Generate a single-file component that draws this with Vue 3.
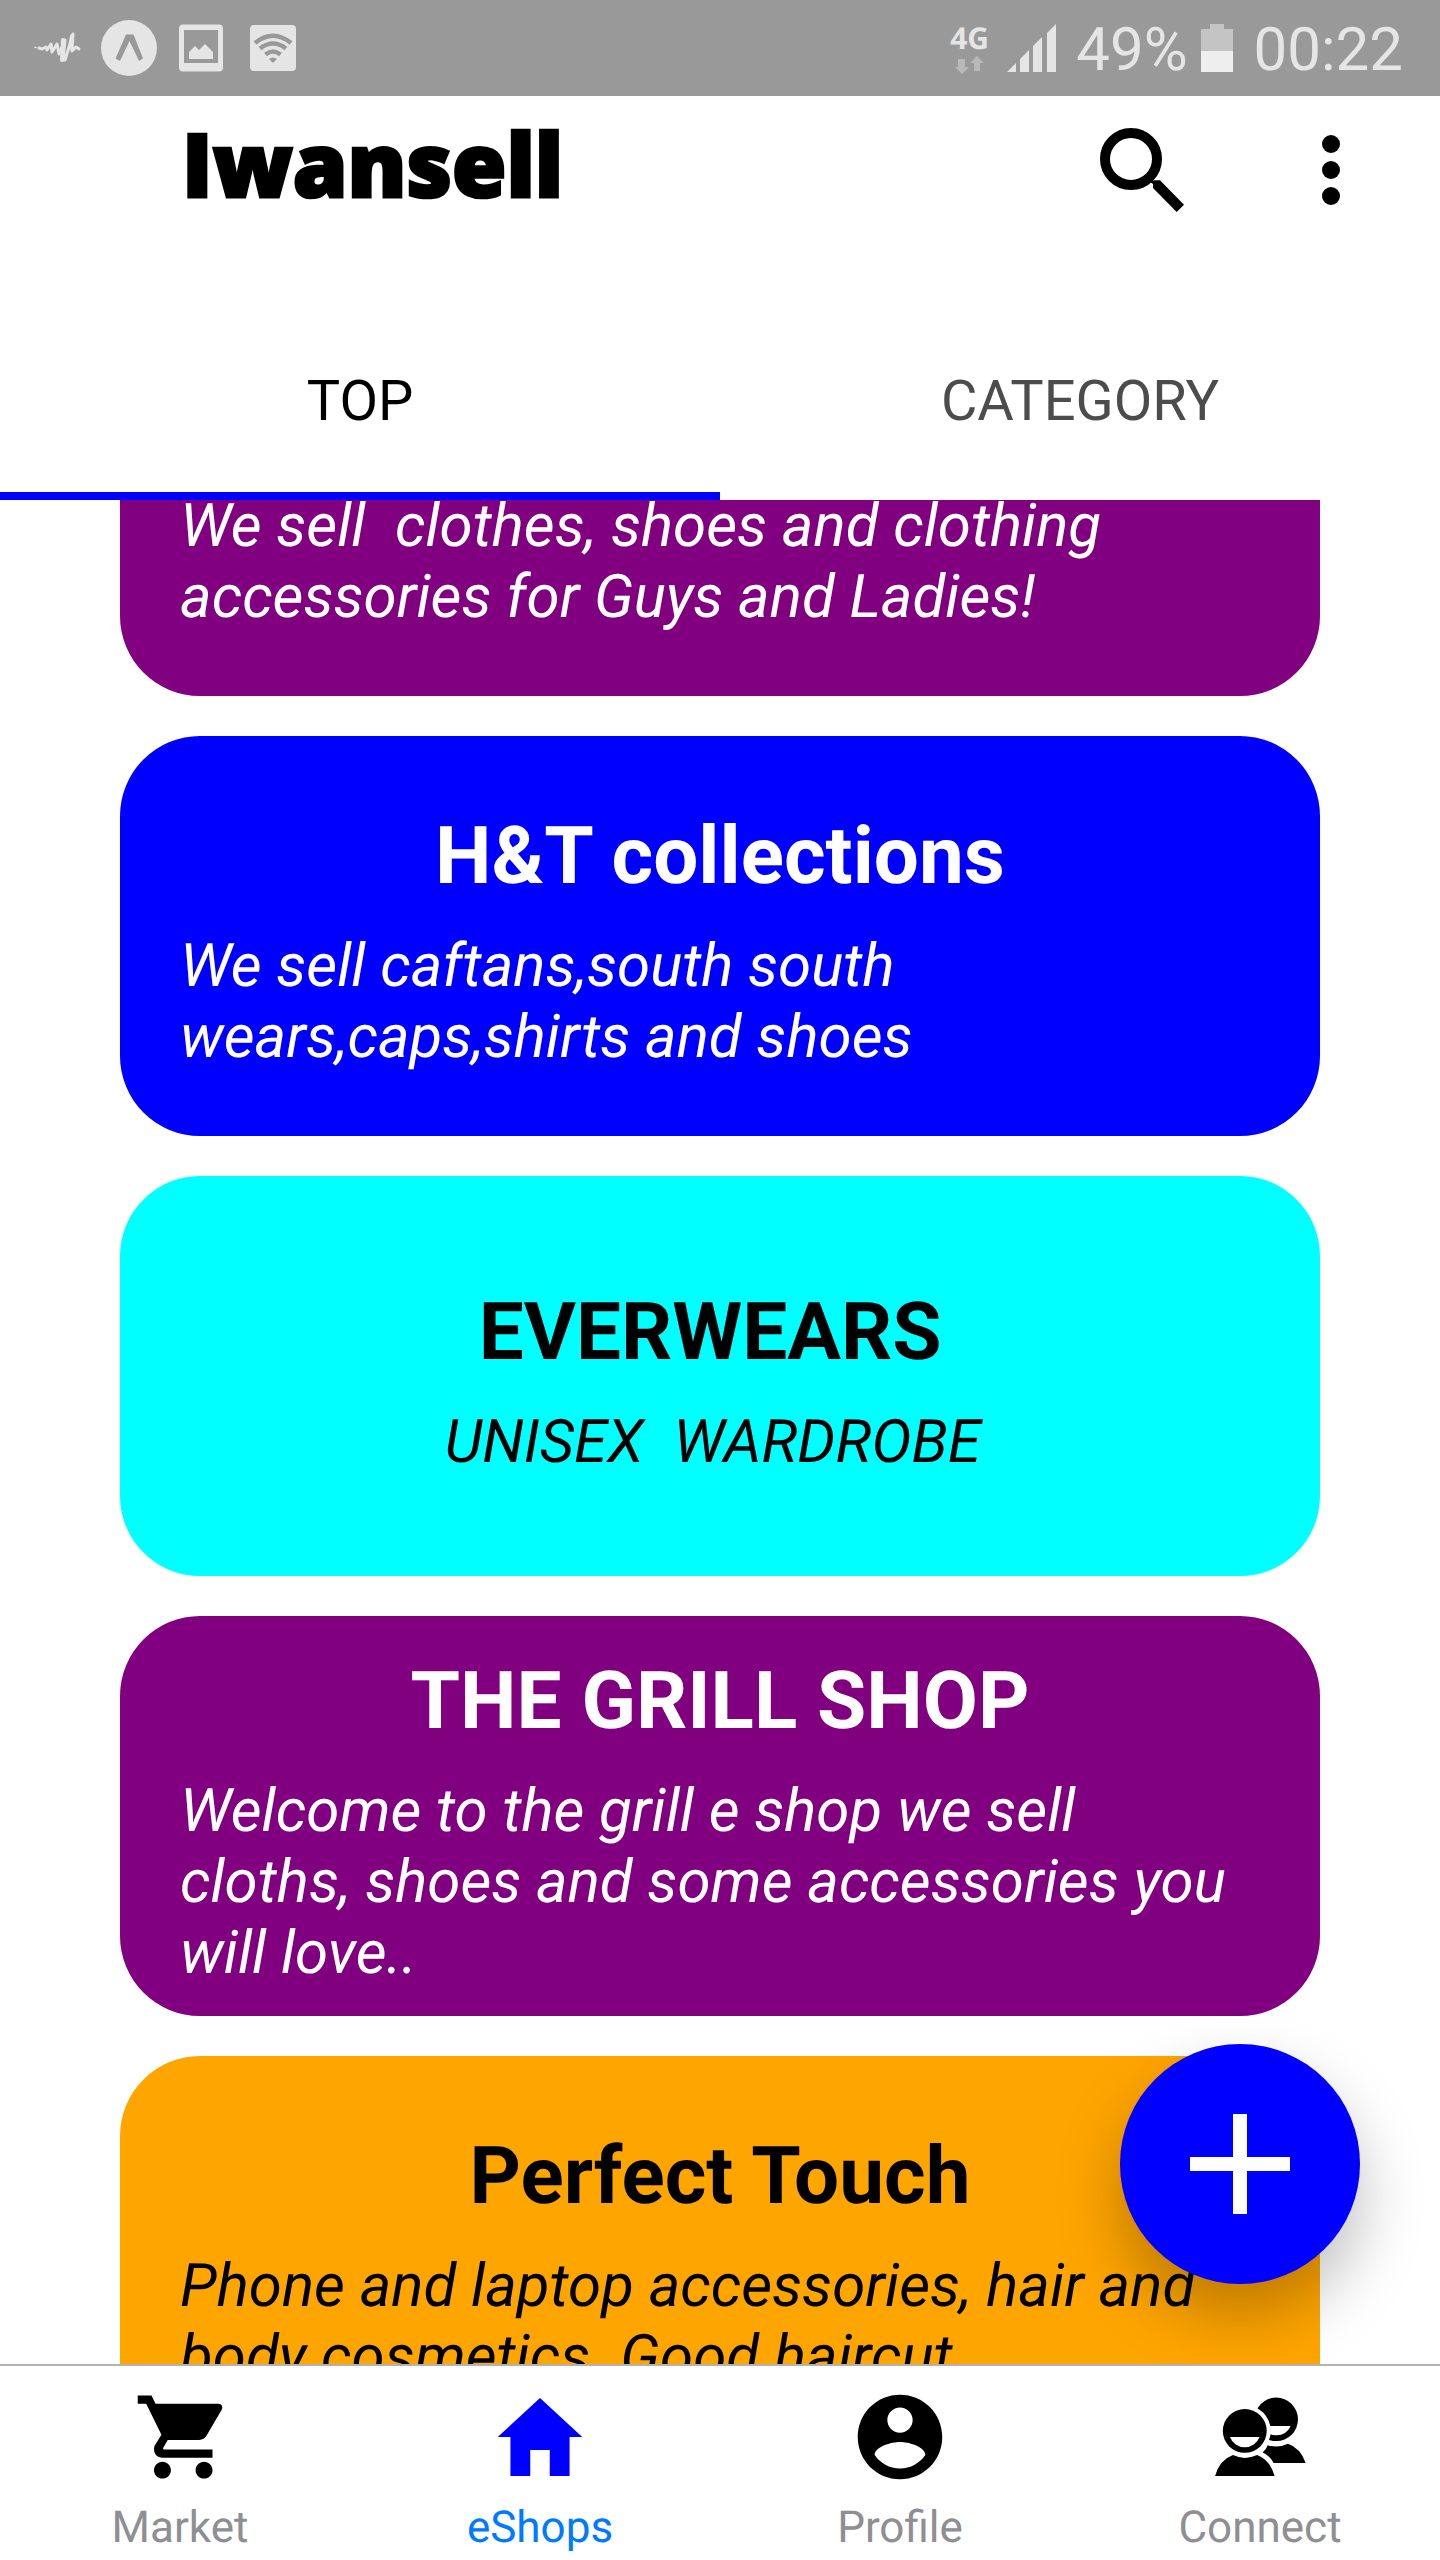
<script setup>
import { ref } from 'vue'

const activeTab = ref('TOP')
const tabs = ['TOP', 'CATEGORY']

const shops = [
  { text: 'We sell  clothes, shoes and clothing accessories for Guys and Ladies!', tone: 'purple', scrolled: true },
  { name: 'H&T collections', text: 'We sell caftans,south south wears,caps,shirts and shoes', tone: 'blue' },
  { name: 'EVERWEARS\u00a0', text: 'UNISEX  WARDROBE\u00a0', tone: 'cyan' },
  { name: 'THE GRILL SHOP', text: 'Welcome to the grill e shop we sell cloths, shoes and some accessories you will love..', tone: 'purple' },
  { name: 'Perfect Touch', text: 'Phone and laptop accessories, hair and body cosmetics. Good haircut', tone: 'orange' },
]
</script>

<template>
  <div class="app">
    <div class="status">
      <div class="status-left">
        <svg class="status-icon" viewBox="0 0 56 56" fill="none" stroke="#e5e5e5" stroke-linecap="round" stroke-linejoin="round">
          <path d="M6 27.500h1" stroke-width="1.500" />
          <path d="M10 28l3 1 4-2 1 3 4-6 1 8 5-8 2 10 6-14-2 20h2L44 14l-1 17 4-4 3 2" stroke-width="3" />
          <path d="M34 20l-1 20M43 16l-2 12" stroke-width="4" />
        </svg>
        <svg class="status-icon" viewBox="0 0 56 56">
          <circle cx="28" cy="28" r="28" fill="#e5e5e5" />
          <path d="M25 14.500h7.500L42 38.500l-4 2.500L28.500 21 19 41l-4.500-2.500z" fill="#999" />
        </svg>
        <svg class="status-icon" viewBox="0 0 56 56" fill="#e5e5e5">
          <path fill-rule="evenodd" d="M10 4.500h36q4 0 4 4v39q0 4-4 4H10q-4 0-4-4v-39q0-4 4-4zM11 10v33h34V10z" />
          <path d="M16 32l6-6 4 4 6-6 8 8v7H16z" />
        </svg>
        <svg class="status-icon" viewBox="0 0 56 56" fill="none" stroke="#999" stroke-width="4.500">
          <rect x="5" y="5" width="46" height="46" rx="4" fill="#e5e5e5" stroke="none" />
          <path d="M10 23q18-14.500 36 0M15 28.500q13-10 26 0M20.500 34.500q7.500-6 15 0" />
          <path d="M24 39q4-3 8 0l-4 4z" fill="#999" stroke="none" />
        </svg>
      </div>
      <div class="status-right">
        <div class="network">
          <span>4G</span>
          <svg viewBox="0 0 44 18" fill="#b9b9b9">
            <path d="M8 3h7v8h4l-7 7-7-7h3zM24 15h6V7h4l-7-7-7 7h4z" />
          </svg>
        </div>
        <svg class="signal" viewBox="0 0 56 48" fill="#e5e5e5">
          <path d="M0 48l9-9v9zM13 48V35l9-9v22zM26 48V22l9-9v35zM40 48V9l9-9v48z" />
        </svg>
        <span class="reading">49%</span>
        <svg class="battery" viewBox="0 0 40 48">
          <path d="M9 0h14v5h9v22H0V5h9z" fill="#c4c4c4" />
          <path d="M0 27h32v21H0z" fill="#eee" />
        </svg>
        <span class="reading">00:22</span>
      </div>
    </div>

    <header class="bar">
      <h1>Iwansell</h1>
      <button class="icon-button" type="button" aria-label="Search">
        <svg width="84" height="84" viewBox="0 0 84 84">
          <circle cx="31" cy="31" r="26" fill="none" stroke="#000" stroke-width="10" />
          <path d="M50 54l4.700-1.700H60l24 24.400-7.300 7.300L53 60v-4z" />
        </svg>
      </button>
      <button class="icon-button" type="button" aria-label="More options">
        <svg width="18" height="84" viewBox="0 0 18 84">
          <circle cx="9" cy="16" r="9" /><circle cx="9" cy="42" r="9" /><circle cx="9" cy="68" r="9" />
        </svg>
      </button>
    </header>

    <nav class="tabs">
      <button
        v-for="tab in tabs"
        :key="tab"
        type="button"
        :class="{ active: tab === activeTab }"
        @click="activeTab = tab"
      >{{ tab }}</button>
    </nav>

    <main class="content">
      <div class="list">
        <article v-for="shop in shops" :key="shop.text" class="shop" :class="[shop.tone, { scrolled: shop.scrolled }]">
          <h2 v-if="shop.name">{{ shop.name }}</h2>
          <p>{{ shop.text }}</p>
        </article>
      </div>
      <button class="fab" type="button" aria-label="Add shop">
        <svg width="100" height="100" viewBox="0 0 100 100" fill="#fff"><path d="M43 0h14v43h43v14H57v43H43V57H0V43h43z" /></svg>
      </button>
    </main>

    <nav class="bottom">
      <a href="#market">
        <svg viewBox="0 0 512 512">
          <path d="M169.600 377.600c-22.900 0-41.600 18.700-41.600 41.600s18.700 41.600 41.600 41.600 41.600-18.700 41.600-41.600-18.700-41.600-41.600-41.600zM48 51.200v41.600h41.600l74.900 151.700-31.300 51c-3.100 5.200-5.200 12.500-5.200 19.800 0 27.800 19 42.700 41.800 42.700H416v-41H177.900c-3.100 0-5.200-2.100-5.200-5.200l2.200-5.200 20.800-35.800h155c15.600 0 29.100-8.300 36.400-21.800L461.900 120c1.200-2.500 2.100-6.300 2.100-10.400 0-11.500-9.400-16.800-20.800-16.800H135.400L115.600 51.200zM374.400 377.600c-22.900 0-41.600 18.700-41.600 41.600s18.700 41.600 41.600 41.600 41.600-18.700 41.600-41.600-18.700-41.600-41.600-41.600z" />
        </svg>
        <span>Market</span>
      </a>
      <a href="#eshops" class="active" aria-current="page">
        <svg viewBox="0 0 512 512" fill="#00f"><path d="M208 448V320h96v128h97.600V256H464L256 64 48 256h62.400v192z" /></svg>
        <span>eShops</span>
      </a>
      <a href="#profile">
        <svg viewBox="0 0 512 512">
          <path fill-rule="evenodd" d="M256 48C141.100 48 48 141.100 48 256s93.100 208 208 208 208-93.100 208-208S370.900 48 256 48zm0 62.400c34.400 0 62.400 28 62.400 62.400s-28 62.400-62.400 62.400-62.400-28-62.400-62.400 28-62.400 62.400-62.400zm0 300.400c-51.600 0-97.800-26.500-124.800-66.600.6-41.400 83.200-64.100 124.800-64.100s124.200 22.700 124.800 64.100c-27 40.100-73.200 66.600-124.800 66.600z" />
        </svg>
        <span>Profile</span>
      </a>
      <a href="#connect">
        <svg viewBox="0 0 512 512">
          <mask id="behind">
            <rect width="512" height="512" fill="#fff" />
            <circle cx="181" cy="226" r="128" fill="#000" />
          </mask>
          <g mask="url(#behind)">
            <circle cx="336" cy="169" r="107" />
            <path d="M265 202h142a78 78 0 0 1-142 0z" fill="#fff" />
          </g>
          <path d="M294 296q51 17 99-7 61 19 88 95H323q-15-33-54-52 17-14 25-36z" />
          <circle cx="181" cy="226" r="108" />
          <path d="M108 256h146a78 78 0 0 1-146 0z" fill="#fff" />
          <path d="M35 448q22-79 88-103 58 28 119 0 64 24 86 103z" />
        </svg>
        <span>Connect</span>
      </a>
    </nav>
  </div>
</template>

<style>
body {
  margin: 0;
}
</style>

<style scoped>
.app {
  display: flex;
  flex-direction: column;
  height: 100vh;
  background: #fff;
  color: #000;
  font-family: Roboto, "Liberation Sans", sans-serif;
  text-rendering: geometricPrecision;
}
button {
  margin: 0;
  padding: 0;
  border: 0;
  background: none;
  color: inherit;
  font: inherit;
}
svg {
  display: block;
}

.status {
  display: flex;
  flex: none;
  justify-content: space-between;
  align-items: center;
  height: 96px;
  padding: 0 37px 0 29px;
  background: #999;
  color: #e5e5e5;
  font-size: 60px;
  line-height: 70px;
}
.status-left {
  display: flex;
  gap: 16px;
}
.status-right {
  display: flex;
  align-items: center;
  gap: 13px;
}
.status-icon {
  width: 56px;
  height: 56px;
}
.reading {
  padding-top: 4px;
}
.network {
  display: flex;
  flex-direction: column;
  gap: 3px;
  width: 44px;
  font: bold 30px/30px "Noto Sans", sans-serif;
}
.network svg {
  width: 44px;
  height: 18px;
}
.signal {
  width: 56px;
  height: 48px;
}
.battery {
  width: 40px;
  height: 48px;
}

.bar {
  display: flex;
  flex: none;
  align-items: center;
  gap: 138px;
  height: 148px;
  padding: 0 100px 56px 182px;
}
.bar h1 {
  flex: 1;
  margin: 0;
  padding-bottom: 14px;
  font: 800 88px/88px "Open Sans", sans-serif;
  -webkit-text-stroke: 3px #000;
}

.tabs {
  display: flex;
  flex: none;
}
.tabs button {
  flex: 1;
  height: 200px;
  border-bottom: 8px solid transparent;
  box-sizing: border-box;
  padding-top: 10px;
  color: #4c4c4c;
  font-size: 56px;
  line-height: 66px;
}
.tabs .active {
  border-color: #00f;
  color: #000;
}

.content {
  position: relative;
  flex: 1;
  min-height: 0;
}
.list {
  display: flex;
  flex-direction: column;
  gap: 40px;
  height: 100%;
  padding: 0 120px;
  box-sizing: border-box;
  overflow: hidden;
}
.shop {
  display: flex;
  flex: none;
  flex-direction: column;
  align-items: center;
  justify-content: center;
  gap: 27px;
  height: 400px;
  padding: 9px 60px 0;
  box-sizing: border-box;
  border-radius: 80px;
}
.shop.scrolled {
  justify-content: flex-end;
  height: 196px;
  padding: 0 60px 64px;
  border-radius: 0 0 80px 80px;
}
.shop h2 {
  margin: 0;
  font-size: 80px;
  line-height: 94px;
}
.shop p {
  margin: 0;
  font-size: 60px;
  font-style: italic;
  line-height: 71px;
  white-space: pre-wrap;
}
.purple {
  background: #800080;
  color: #fff;
}
.blue {
  background: #00f;
  color: #fff;
}
.cyan {
  background: #0ff;
}
.orange {
  background: #ffa500;
}

.fab {
  position: absolute;
  right: 80px;
  bottom: 80px;
  display: flex;
  align-items: center;
  justify-content: center;
  width: 240px;
  height: 240px;
  border-radius: 50%;
  background: #00f;
  box-shadow: 0 32px 64px rgba(0, 0, 0, 0.26);
}

.bottom {
  position: relative;
  display: flex;
  flex: none;
  border-top: 2px solid #b2b2b2;
  background: #fff;
}
.bottom a {
  display: flex;
  flex: 1;
  flex-direction: column;
  align-items: center;
  gap: 12px;
  padding: 19px 0 7px;
  color: #8e8e93;
  font-size: 44px;
  line-height: 52px;
  text-decoration: none;
}
.bottom a.active {
  color: #007aff;
}
.bottom svg {
  width: 104px;
  height: 104px;
}
</style>
